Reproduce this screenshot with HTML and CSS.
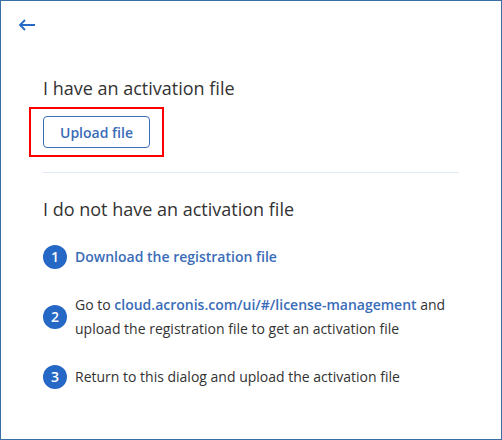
FILE: index.html
```html
<!DOCTYPE html>
<html lang="en">
<head>
    <meta charset="UTF-8">
    <title>Activation</title>
    <link rel="stylesheet" href="styles.css">
</head>
<body>
<div class="dialog">
    <div class="back">
        <svg width="18" height="14" viewBox="0 0 18 14"><path d="M17 7H2M7 2L2 7l5 5" fill="none" stroke="#2668c5" stroke-width="1.800"/></svg>
    </div>
    <div class="content">
        <h2>I have an activation file</h2>
        <div class="upload-wrap">
            <button class="upload">Upload file</button>
        </div>
        <hr>
        <h2>I do not have an activation file</h2>
        <div class="step">
            <span class="num">1</span>
            <p><a href="#">Download the registration file</a></p>
        </div>
        <div class="step">
            <span class="num">2</span>
            <p>Go to <a href="#">cloud.acronis.com/ui/#/license-management</a> and upload the registration file to get an activation file</p>
        </div>
        <div class="step">
            <span class="num">3</span>
            <p>Return to this dialog and upload the activation file</p>
        </div>
    </div>
</div>
</body>
</html>
```

FILE: styles.css
```css
body{
    margin:0;
    font-family:"Open Sans", sans-serif;
    color:#333333;
    background-color:white;
}
.dialog{
    width:502px;
    height:440px;
    box-sizing:border-box;
    border:1px solid #3a6ea5;
    overflow:hidden;
}
.back{
    height:14px;
    padding:17px 0 0 17px;
}
.back svg{
    display:block;
}
.content{
    padding:0 42px;
}
h2{
    margin:0;
    font-size:18px;
    font-weight:400;
    line-height:24px;
}
.content h2:first-child{
    margin-top:44px;
}
.upload-wrap{
    width:135px;
    height:50px;
    box-sizing:border-box;
    margin:7px 0 0 -14px;
    border:2px solid #ff0000;
    display:flex;
    align-items:center;
    justify-content:center;
}
.upload{
    flex:none;
    width:107px;
    height:32px;
    padding:0;
    background-color:white;
    border:1px solid #3a6cb8;
    border-radius:4px;
    color:#3a6cb8;
    font-family:"Open Sans", sans-serif;
    font-size:14px;
    font-weight:600;
}
hr{
    margin:15px 0 0;
    border:none;
    border-top:1px solid #e1e9f5;
}
hr + h2{
    margin-top:24px;
}
.step{
    display:flex;
    align-items:center;
    gap:8px;
    margin-top:24px;
}
.num{
    flex:none;
    width:24px;
    height:24px;
    border-radius:50%;
    background-color:#2668c5;
    color:white;
    font-size:14px;
    font-weight:600;
    line-height:24px;
    text-align:center;
}
.step p{
    margin:0;
    font-size:14px;
    line-height:24px;
}
.step a{
    color:#3a6cb8;
    font-weight:600;
    text-decoration:none;
}
```
